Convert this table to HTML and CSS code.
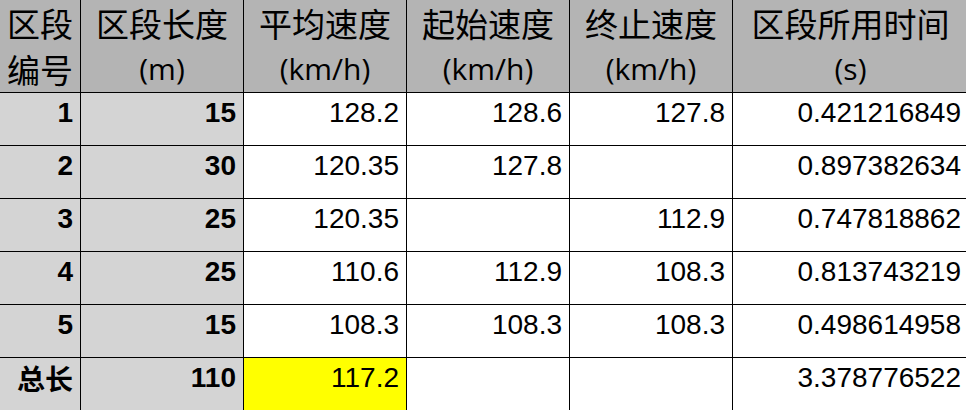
FILE: index.html
```html
<!DOCTYPE html>
<html lang="zh-CN">
<head>
    <meta charset="UTF-8">
    <meta name="viewport" content="width=device-width, initial-scale=1.0">
    <title>区段速度表</title>
    <link rel="stylesheet" href="styles.css">
</head>
<body>
    <table class="sheet">
        <thead>
            <tr>
                <th class="c-id"><span class="ln zh">区段</span><span class="ln zh">编号</span></th>
                <th class="c-num"><span class="ln zh">区段长度</span><span class="ln">(m)</span></th>
                <th class="c-num"><span class="ln zh">平均速度</span><span class="ln">(km/h)</span></th>
                <th class="c-num"><span class="ln zh">起始速度</span><span class="ln">(km/h)</span></th>
                <th class="c-num"><span class="ln zh">终止速度</span><span class="ln">(km/h)</span></th>
                <th class="c-time"><span class="ln zh">区段所用时间</span><span class="ln">(s)</span></th>
            </tr>
        </thead>
        <tbody>
            <tr>
                <td class="key">1</td><td class="key">15</td>
                <td>128.2</td><td>128.6</td><td>127.8</td><td>0.421216849</td>
            </tr>
            <tr>
                <td class="key">2</td><td class="key">30</td>
                <td>120.35</td><td>127.8</td><td></td><td>0.897382634</td>
            </tr>
            <tr>
                <td class="key">3</td><td class="key">25</td>
                <td>120.35</td><td></td><td>112.9</td><td>0.747818862</td>
            </tr>
            <tr>
                <td class="key">4</td><td class="key">25</td>
                <td>110.6</td><td>112.9</td><td>108.3</td><td>0.813743219</td>
            </tr>
            <tr>
                <td class="key">5</td><td class="key">15</td>
                <td>108.3</td><td>108.3</td><td>108.3</td><td>0.498614958</td>
            </tr>
            <tr>
                <td class="key zh-cell">总长</td><td class="key">110</td>
                <td class="mark">117.2</td><td></td><td></td><td>3.378776522</td>
            </tr>
        </tbody>
    </table>
</body>
</html>
```

FILE: styles.css
```css
body {
    margin: 0;
    background: #ffffff;
    overflow: hidden;
}
.sheet {
    border-collapse: separate;
    border-spacing: 0;
    table-layout: fixed;
    width: 968px;
    font-family: "Liberation Sans", "Noto Sans CJK SC", sans-serif;
    color: #000000;
}
.sheet th,
.sheet td {
    box-sizing: border-box;
    border-right: 1px solid #000000;
    border-bottom: 1px solid #000000;
}
.sheet th {
    height: 92px;
    padding: 0;
    background: #b4b4b4;
    font-family: "Open Sans", sans-serif;
    font-weight: normal;
    font-size: 30px;
    line-height: 30px;
    text-align: center;
    vertical-align: top;
}
.sheet th .ln {
    display: flex;
    justify-content: center;
    align-items: center;
    height: 45px;
    white-space: nowrap;
}
.sheet th .ln.zh {
    height: 46px;
    font-family: "Noto Sans CJK SC", sans-serif;
    font-size: 33px;
    line-height: 33px;
}
.c-id { width: 81px; }
.c-num { width: 163px; }
.c-time { width: 236px; }
.sheet td {
    height: 53px;
    padding: 0 7px 12px 0;
    font-size: 28px;
    line-height: 28px;
    text-align: right;
    vertical-align: middle;
}
.sheet td.key {
    background: #d4d4d4;
    font-weight: bold;
}
.sheet td.zh-cell {
    font-family: "Noto Sans CJK SC", sans-serif;
}
.sheet td.mark {
    background: #ffff00;
}
```
